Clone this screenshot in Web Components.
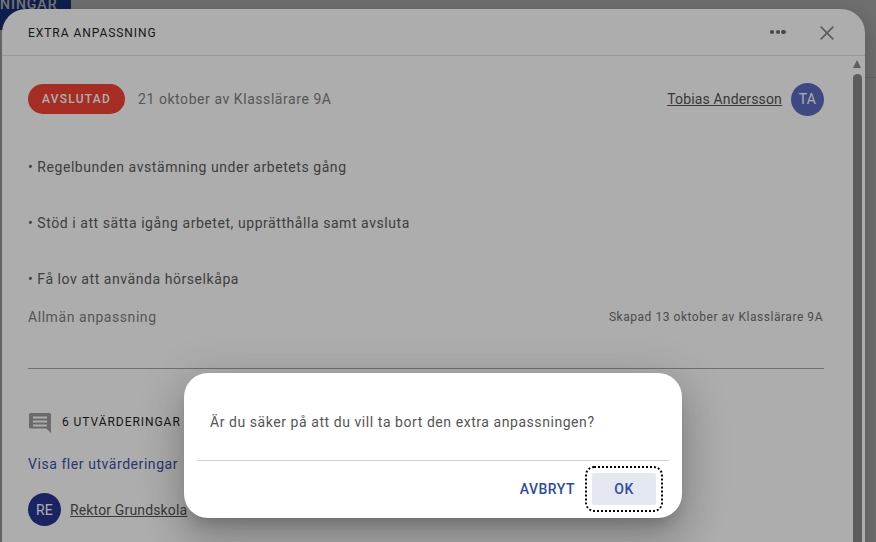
<!DOCTYPE html>
<html>
<head>
<meta charset="utf-8">
<style>
  html, body { margin: 0; padding: 0; background: #6f6f6f; }
  body { font-family: Roboto, sans-serif; }
</style>
</head>
<body>
<app-page>
  <detail-panel title-text="Extra anpassning">
    <status-row></status-row>
    <p-line style="margin-top:43px">• Regelbunden avstämning under arbetets gång</p-line>
    <p-line style="margin-top:36px">• Stöd i att sätta igång arbetet, upprätthålla samt avsluta</p-line>
    <p-line style="margin-top:36px">• Få lov att använda hörselkåpa</p-line>
    <meta-row></meta-row>
    <comment-list></comment-list>
  </detail-panel>
  <confirm-dialog>Är du säker på att du vill ta bort den extra anpassningen?</confirm-dialog>
</app-page>
<script>
class AppPage extends HTMLElement {
  constructor() {
    super();
    this.attachShadow({ mode: "open" });
    this.shadowRoot.innerHTML = `
      <style>
        :host { display: block; position: relative; width: 876px; height: 542px; overflow: hidden; background: #fff; }
        .back { position: absolute; inset: 0; background: #f0f0f0; }
        .tab {
          position: absolute; left: 0; top: 0; width: 71px; height: 30px; background: #2345ab; color: #fff;
          font: 500 14px Roboto, sans-serif; letter-spacing: 1px; line-height: 8px; text-align: right; padding-right: 18px;
          box-sizing: border-box; white-space: nowrap;
        }
        .rule { position: absolute; left: 865px; right: 0; top: 77px; height: 1px; background: #d8d8d8; }
        .scrim { position: absolute; inset: 0; background: rgba(0, 0, 0, .32); }
        .top-scrim { position: absolute; inset: 0; background: rgba(0, 0, 0, .32); }
        .panel-wrap { position: absolute; left: 2px; top: 9px; width: 863px; height: 560px; }
        .dialog-wrap { position: absolute; left: 184px; top: 373px; }
      </style>
      <div class="back"></div>
      <div class="tab">NINGAR</div>
      <div class="rule"></div>
      <div class="scrim"></div>
      <div class="panel-wrap"><slot name="panel"></slot></div>
      <div class="top-scrim"></div>
      <div class="dialog-wrap"><slot name="dialog"></slot></div>
    `;
  }
  connectedCallback() {
    this.querySelector("detail-panel").slot = "panel";
    this.querySelector("confirm-dialog").slot = "dialog";
  }
}
customElements.define("app-page", AppPage);

class DetailPanel extends HTMLElement {
  constructor() {
    super();
    this.attachShadow({ mode: "open" });
  }
  connectedCallback() {
    const title = this.getAttribute("title-text");
    this.shadowRoot.innerHTML = `
      <style>
        :host {
          display: block; height: 100%; background: #fff; border-radius: 24px 24px 0 0; position: relative;
          box-shadow: 0 8px 24px rgba(0, 0, 0, .2); overflow: hidden;
        }
        header {
          display: flex; align-items: center; height: 46px; border-bottom: 1px solid #e2e2e2; padding: 0 26px;
        }
        h2 {
          flex: 1; margin: 0; font: 400 12px Roboto, sans-serif; letter-spacing: .95px; color: #1f1f1f; text-transform: uppercase;
          position: relative; top: 1px;
        }
        .more { display: flex; gap: 1.3px; margin-right: 34px; }
        .more i { width: 4.6px; height: 4.6px; border-radius: 50%; background: #6a6a6a; }
        .close { display: block; margin-right: 5px; position: relative; top: 1px; }
        .content { padding: 28px 41px 0 26px; }
        .bar { position: absolute; left: 851px; top: 51px; width: 9px; }
        .bar .up { width: 0; height: 0; border: 4.5px solid transparent; border-top: 0; border-bottom: 8px solid #8b8b8b; }
        .bar .thumb { margin-top: 6px; height: 600px; border-radius: 5px; background: #8a8a8a; }
      </style>
      <header>
        <h2>${title}</h2>
        <div class="more"><i></i><i></i><i></i></div>
        <svg class="close" width="14" height="14" viewBox="0 0 14 14"><path d="M.7.7l12.600 12.600M13.300.7L.7 13.300" stroke="#8c8c8c" stroke-width="1.800" fill="none"/></svg>
      </header>
      <div class="content"><slot></slot></div>
      <div class="bar"><div class="up"></div><div class="thumb"></div></div>
    `;
  }
}
customElements.define("detail-panel", DetailPanel);

class StatusRow extends HTMLElement {
  constructor() {
    super();
    this.attachShadow({ mode: "open" });
    this.shadowRoot.innerHTML = `
      <style>
        :host { display: flex; align-items: center; height: 30px; font: 400 14px Roboto, sans-serif; letter-spacing: .56px; color: #7f7f7f; }
        .pill {
          width: 97px; height: 30px; border-radius: 15px; background: #f44336; color: #fff; display: flex; align-items: center; justify-content: center;
          font: 500 12px Roboto, sans-serif; letter-spacing: 1.25px; margin-right: 13px;
        }
        .when { flex: 1; }
        a { color: #555; text-decoration: underline; margin-right: 9px; letter-spacing: .15px; }
        .avatar {
          width: 33px; height: 33px; border-radius: 50%; background: #5c6bc0; color: #fff; display: flex; align-items: center; justify-content: center;
          font: 400 14px Roboto, sans-serif; letter-spacing: .3px;
        }
      </style>
      <span class="pill">AVSLUTAD</span>
      <span class="when">21 oktober av Klasslärare 9A</span>
      <a>Tobias Andersson</a>
      <span class="avatar">TA</span>
    `;
  }
}
customElements.define("status-row", StatusRow);

class PLine extends HTMLElement {
  constructor() {
    super();
    this.attachShadow({ mode: "open" });
    this.shadowRoot.innerHTML = `
      <style>
        :host { display: block; font: 400 14px/20px Roboto, sans-serif; letter-spacing: .56px; color: #5c5c5c; }
      </style>
      <slot></slot>
    `;
  }
}
customElements.define("p-line", PLine);

class MetaRow extends HTMLElement {
  constructor() {
    super();
    this.attachShadow({ mode: "open" });
    this.shadowRoot.innerHTML = `
      <style>
        :host {
          display: flex; align-items: center; justify-content: space-between; margin-top: 18px; height: 20px; padding-bottom: 41px;
          border-bottom: 1px solid #a6a6a6; font: 400 14px Roboto, sans-serif; letter-spacing: .56px; color: #7f7f7f;
        }
        small { font-size: 12px; letter-spacing: .54px; color: #6f6f6f; margin-right: 1px; }
      </style>
      <span>Allmän anpassning</span>
      <small>Skapad 13 oktober av Klasslärare 9A</small>
    `;
  }
}
customElements.define("meta-row", MetaRow);

class CommentList extends HTMLElement {
  constructor() {
    super();
    this.attachShadow({ mode: "open" });
    this.shadowRoot.innerHTML = `
      <style>
        :host { display: block; padding-top: 44px; font: 400 14px Roboto, sans-serif; letter-spacing: .56px; }
        .head { display: flex; align-items: center; height: 20px; font-size: 12px; letter-spacing: .95px; color: #1f1f1f; }
        svg { display: block; margin: 0 11px 0 1px; }
        .head span { position: relative; top: -1px; }
        .more { margin-top: 21px; height: 20px; line-height: 20px; color: #3f51a5; }
        .row { display: flex; align-items: center; margin-top: 19px; height: 33px; }
        .avatar {
          width: 33px; height: 33px; border-radius: 50%; background: #283593; color: #fff; display: flex; align-items: center; justify-content: center;
          margin-right: 9px; letter-spacing: .3px;
        }
        a { color: #555; text-decoration: underline; letter-spacing: .15px; }
      </style>
      <div class="head">
        <svg width="22" height="20" viewBox="0 0 22 20"><path d="M1.500 0h19A1.500 1.500 0 0 1 22 1.500V20l-4.800-4.500H1.500A1.500 1.500 0 0 1 0 14V1.500A1.500 1.500 0 0 1 1.500 0zM4 3.500v2h14v-2zM4 7.500v2h14v-2zM4 11.500v2h14v-2z" fill="#9c9c9c" fill-rule="evenodd"/></svg>
        <span>6 UTVÄRDERINGAR</span>
      </div>
      <div class="more">Visa fler utvärderingar</div>
      <div class="row"><span class="avatar">RE</span><a>Rektor Grundskola</a></div>
    `;
  }
}
customElements.define("comment-list", CommentList);

class ConfirmDialog extends HTMLElement {
  constructor() {
    super();
    this.attachShadow({ mode: "open" });
    this.shadowRoot.innerHTML = `
      <style>
        :host {
          display: block; width: 498px; height: 145px; box-sizing: border-box; padding: 0 13px; background: #fff; border-radius: 24px;
          box-shadow: 0 11px 15px -7px rgba(0,0,0,.2), 0 24px 38px 3px rgba(0,0,0,.14), 0 9px 46px 8px rgba(0,0,0,.12);
        }
        .msg {
          height: 88px; box-sizing: border-box; padding: 39px 13px 0; border-bottom: 1px solid #cfcfcf;
          font: 400 14px/20px Roboto, sans-serif; letter-spacing: .56px; color: #555;
        }
        .actions { display: flex; justify-content: flex-end; align-items: center; height: 56px; padding-right: 13px; }
        button {
          font: 500 14px Roboto, sans-serif; letter-spacing: .5px; color: #2f4aa0; background: none; border: 0; padding: 0; height: 32px; border-radius: 2px;
        }
        .ok { width: 64px; background: #e6e8f1; margin-left: 17px; outline: 2px dotted #000; outline-offset: 5px; }
      </style>
      <div class="msg"><slot></slot></div>
      <div class="actions"><button>AVBRYT</button><button class="ok">OK</button></div>
    `;
  }
}
customElements.define("confirm-dialog", ConfirmDialog);
</script>
</body>
</html>
